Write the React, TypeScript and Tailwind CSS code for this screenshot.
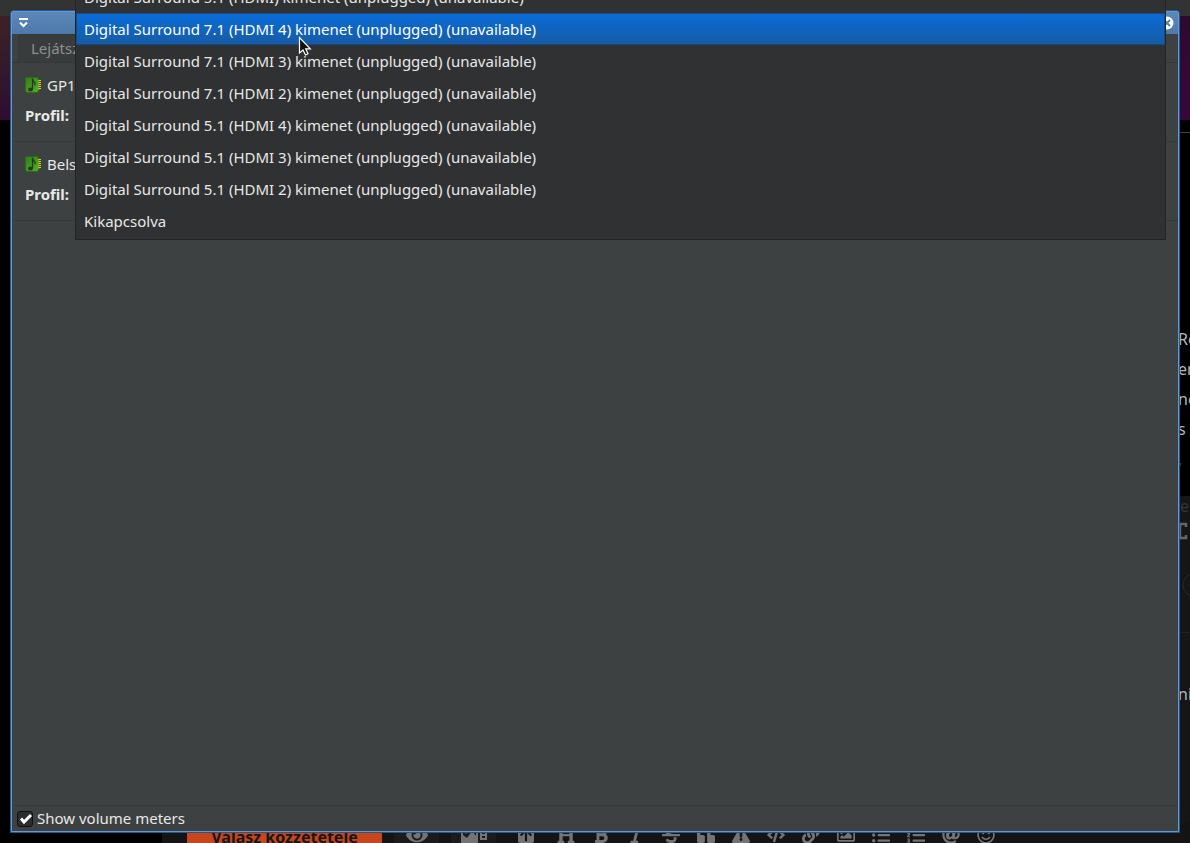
import React from "react";
import {
  FaEye, FaArrowUp, FaHeading, FaBold, FaItalic, FaStrikethrough, FaQuoteLeft,
  FaExclamationTriangle, FaCode, FaLink, FaRegImage, FaListUl, FaListOl, FaAt, FaRegSmile,
} from "react-icons/fa";

const outputs = [
  "Digital Surround 5.1 (HDMI) kimenet (unplugged) (unavailable)",
  "Digital Surround 7.1 (HDMI 4) kimenet (unplugged) (unavailable)",
  "Digital Surround 7.1 (HDMI 3) kimenet (unplugged) (unavailable)",
  "Digital Surround 7.1 (HDMI 2) kimenet (unplugged) (unavailable)",
  "Digital Surround 5.1 (HDMI 4) kimenet (unplugged) (unavailable)",
  "Digital Surround 5.1 (HDMI 3) kimenet (unplugged) (unavailable)",
  "Digital Surround 5.1 (HDMI 2) kimenet (unplugged) (unavailable)",
  "Kikapcsolva",
];

const tools = [
  { name: "Címsor", Icon: FaHeading },
  { name: "Félkövér", Icon: FaBold },
  { name: "Dőlt", Icon: FaItalic },
  { name: "Áthúzott", Icon: FaStrikethrough },
  { name: "Idézet", Icon: FaQuoteLeft },
  { name: "Figyelmeztetés", Icon: FaExclamationTriangle },
  { name: "Kód", Icon: FaCode },
  { name: "Hivatkozás", Icon: FaLink },
  { name: "Kép", Icon: FaRegImage },
  { name: "Lista", Icon: FaListUl },
  { name: "Számozott lista", Icon: FaListOl },
  { name: "Említés", Icon: FaAt },
  { name: "Hangulatjel", Icon: FaRegSmile },
];

function CardIcon() {
  return (
    <svg width="17" height="16" viewBox="0 0 17 16" className="shrink-0" aria-hidden="true">
      <defs>
        <linearGradient id="board" x1="0" y1="0" x2="1" y2="1">
          <stop offset="0" stopColor="#2f7d17" />
          <stop offset="1" stopColor="#58b02f" />
        </linearGradient>
      </defs>
      <path d="M1 .5h12v2h1.500v11H13v2H2L.5 14V1z" fill="url(#board)" stroke="#2c6b12" />
      <path d="M13.500 3.500h2.500M13.500 5.500h2.500M13.500 7.500h2.500M13.500 9.500h2.500M13.500 11.500h2.500" stroke="#e8c52c" />
      <path d="M7.500 1.500V12M7.500 2q.5 2.500 2.500 4v2.500" stroke="#26381c" strokeWidth="1.300" fill="none" />
      <ellipse cx="5.500" cy="12.500" rx="2.500" ry="2" fill="#26381c" />
    </svg>
  );
}

function MediaIcon() {
  return (
    <svg width="26" height="18" viewBox="0 0 26 18" fill="none" stroke="currentColor" strokeWidth="2" aria-hidden="true">
      <path d="M1 2h15v14H1z" />
      <path d="M2 15V9l4 3 5-7 5 6v4z" fill="currentColor" stroke="none" />
      <circle cx="5" cy="6" r="1.500" fill="currentColor" stroke="none" />
      <path d="M20 1h5v12h-5zM20 5h5M20 9h5" />
    </svg>
  );
}

function Device({ name }: { name: string }) {
  return (
    <section className="h-[79px] border-b border-[#373a3a] px-[13px] pt-[7px]">
      <div className="flex h-[30px] items-center gap-[5px]">
        <CardIcon />
        <h2>{name}</h2>
      </div>
      <div className="flex h-[30px] items-center font-bold">Profil:</div>
    </section>
  );
}

function Desktop() {
  return (
    <div className="absolute inset-0 flex flex-col overflow-hidden bg-black">
      <div className="h-4 bg-[#333333]" />
      <div className="flex h-[104px] justify-between">
        <div className="w-1/2 bg-linear-to-b from-[#3c2224] to-[#2d0c31]" />
        <div className="w-1/2 bg-linear-to-b from-[#2d0a30] to-[#37083a]" />
      </div>
      <div className="flex flex-1 justify-end">
        <div className="flex w-3 flex-col overflow-hidden pt-3 text-base text-[#b5b5b5]">
          <div className="h-[192px] border-t border-[#444444]" />
          <div className="h-[172px] leading-[30px]">
            <p>Re</p>
            <p>er</p>
            <p>ne</p>
            <p>s</p>
            <p className="text-[#444444]">,</p>
          </div>
          <div className="h-[136px] bg-[#161616] pl-0.5">
            <p className="leading-5 text-[#333333]">e</p>
            <svg width="12" height="18" viewBox="0 0 12 18" className="mt-1.5 -ml-0.5" fill="none" stroke="#666666" strokeWidth="2.500" aria-hidden="true">
              <path d="M8 5V2H0M2 2v14M8 13v3H0" />
            </svg>
            <svg width="24" height="28" viewBox="0 0 24 28" className="mt-7" fill="none" stroke="#2a2a2a" aria-hidden="true">
              <circle cx="15" cy="17" r="12" />
              <path d="M8 17h10" />
            </svg>
          </div>
          <div className="flex-1 border-t border-[#222222] bg-[#161616] pt-12">
            <p className="leading-[26px]">ni</p>
          </div>
        </div>
      </div>
      <div className="ml-[162px] flex h-[21px] items-start bg-[#141414] pl-[25px] whitespace-nowrap text-[#747474]">
        <button className="mr-3 h-7 w-[195px] shrink-0 bg-[#c9451a] pt-0.5 text-base leading-6 font-bold text-[#161616]">Válasz közzététele</button>
        <button aria-label="Előnézet" className="mr-3 flex h-[26px] w-[45px] shrink-0 items-center justify-center bg-[#1b1b1b] text-[22px]"><FaEye /></button>
        <button aria-label="Média" className="mr-3 flex h-[26px] w-[45px] shrink-0 items-center justify-center bg-[#1b1b1b]">
          <MediaIcon />
        </button>
        <button aria-label="Feltöltés" className="mr-[5px] flex h-[26px] w-[35px] shrink-0 items-center justify-center">
          <span className="rounded-xs bg-[#747474] p-px text-[#141414]"><FaArrowUp className="text-sm" /></span>
        </button>
        {tools.map(({ name, Icon }) => (
          <button key={name} aria-label={name} className="flex h-[26px] w-[35px] shrink-0 items-center justify-center text-lg">
            <Icon />
          </button>
        ))}
      </div>
    </div>
  );
}

export default function App() {
  return (
    <div className="relative flex min-h-screen overflow-hidden font-['Noto_Sans',sans-serif] text-[15px] text-[#e8e8e6]">
      <Desktop />
      <main className="relative mx-2.5 mt-2.5 mb-2.5 flex flex-1 flex-col rounded-t-sm border border-[#28568c] bg-[#3d4141]">
        <div className="flex flex-1 flex-col rounded-t-xs border border-[#5d9be0]">
          <header className="flex h-[22px] items-center justify-between bg-linear-to-b from-[#5b87b9] to-[#4d79ab] px-1">
            <button aria-label="Ablak menü" className="ml-0.5">
              <svg width="11" height="10" viewBox="0 0 11 10" fill="none" stroke="#ffffff" strokeWidth="2" aria-hidden="true">
                <path d="M1 1h9M2 4.500l3.500 3.500L9 4.500" />
              </svg>
            </button>
            <button aria-label="Bezárás">
              <svg width="14" height="14" viewBox="0 0 14 14" aria-hidden="true">
                <circle cx="7" cy="7" r="6.500" fill="#ffffff" />
                <path d="M4 4l6 6M10 4l-6 6" stroke="#5580b0" strokeWidth="2" />
              </svg>
            </button>
          </header>
          <nav className="flex h-[29px] items-end border-b border-[#353838] pl-1.5">
            <button className="h-7 rounded-t-sm border border-b-0 border-[#353838] bg-[#393c3c] px-3 text-[#8c8f8f]">Lejátsz</button>
          </nav>
          <Device name="GP1" />
          <Device name="Bels" />
          <div className="flex-1" />
          <footer className="flex h-[26px] items-center border-t border-[#373a3a] px-[5px]">
            <label className="flex items-center gap-1">
              <span className="relative flex h-4 w-4">
                <input type="checkbox" defaultChecked className="peer h-4 w-4 appearance-none rounded-[3px] border border-[#111111] bg-[#2b2d2d]" />
                <svg viewBox="0 0 16 16" className="pointer-events-none absolute inset-0 hidden peer-checked:block" fill="none" stroke="#ffffff" strokeWidth="3" aria-hidden="true">
                  <path d="M4 7.500l3 3.500L14 4" />
                </svg>
              </span>
              Show volume meters
            </label>
          </footer>
        </div>
      </main>
      <ul role="listbox" aria-label="Profil" className="absolute -top-5 right-6 left-[75px] border border-[#232425] bg-[#303133] pb-0.5">
        {outputs.map((text, i) => (
          <li
            key={text}
            role="option"
            aria-selected={i === 1}
            className="flex h-8 items-center border border-transparent px-[7px] aria-selected:border-[#174b80] aria-selected:bg-linear-to-b aria-selected:from-[#086cd8] aria-selected:to-[#155ba6] aria-selected:text-white"
          >
            {text}
          </li>
        ))}
      </ul>
      <svg width="14" height="21" viewBox="0 0 14 21" className="pointer-events-none absolute top-9 left-[298px]" aria-hidden="true">
        <path d="M1.500 1.500v15.500l3.500-3 2.500 5 2.500-1.200-2.300-5h4.600z" fill="#111111" stroke="#ffffff" strokeWidth="1.200" />
      </svg>
    </div>
  );
}
